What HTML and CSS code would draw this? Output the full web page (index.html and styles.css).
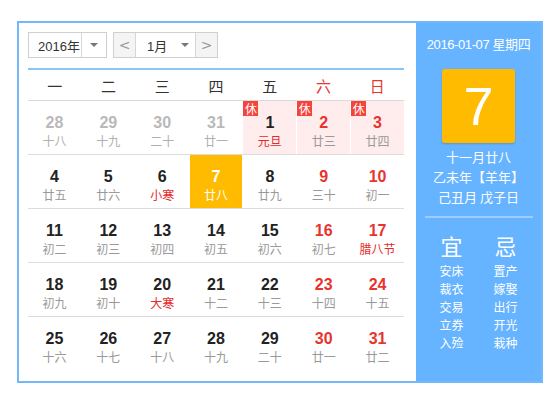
FILE: index.html
```html
<!DOCTYPE html>
<html lang="zh-CN">
<head>
<meta charset="utf-8">
<title>万年历</title>
<link rel="stylesheet" href="styles.css">
</head>
<body>
<div class="cal">
  <div class="main">
    <div class="toolbar">
      <div class="sel year"><span class="val">2016年</span><span class="drop"><i class="caret"></i></span></div>
      <div class="month-group">
        <span class="nav">&lt;</span>
        <div class="sel month"><span class="val">1月</span><span class="drop"><i class="caret"></i></span></div>
        <span class="nav">&gt;</span>
      </div>
    </div>
    <div class="week">
      <span>一</span><span>二</span><span>三</span><span>四</span><span>五</span><span class="red">六</span><span class="red">日</span>
    </div>
    <div class="row">
      <div class="cell other"><b>28</b><em>十八</em></div>
      <div class="cell other"><b>29</b><em>十九</em></div>
      <div class="cell other"><b>30</b><em>二十</em></div>
      <div class="cell other"><b>31</b><em>廿一</em></div>
      <div class="cell hol"><span class="badge">休</span><b>1</b><em class="fest">元旦</em></div>
      <div class="cell hol wk"><span class="badge">休</span><b>2</b><em>廿三</em></div>
      <div class="cell hol wk"><span class="badge">休</span><b>3</b><em>廿四</em></div>
    </div>
    <div class="row">
      <div class="cell"><b>4</b><em>廿五</em></div>
      <div class="cell"><b>5</b><em>廿六</em></div>
      <div class="cell"><b>6</b><em class="fest">小寒</em></div>
      <div class="cell today"><b>7</b><em>廿八</em></div>
      <div class="cell"><b>8</b><em>廿九</em></div>
      <div class="cell wk"><b>9</b><em>三十</em></div>
      <div class="cell wk"><b>10</b><em>初一</em></div>
    </div>
    <div class="row">
      <div class="cell"><b>11</b><em>初二</em></div>
      <div class="cell"><b>12</b><em>初三</em></div>
      <div class="cell"><b>13</b><em>初四</em></div>
      <div class="cell"><b>14</b><em>初五</em></div>
      <div class="cell"><b>15</b><em>初六</em></div>
      <div class="cell wk"><b>16</b><em>初七</em></div>
      <div class="cell wk"><b>17</b><em class="fest">腊八节</em></div>
    </div>
    <div class="row">
      <div class="cell"><b>18</b><em>初九</em></div>
      <div class="cell"><b>19</b><em>初十</em></div>
      <div class="cell"><b>20</b><em class="fest">大寒</em></div>
      <div class="cell"><b>21</b><em>十二</em></div>
      <div class="cell"><b>22</b><em>十三</em></div>
      <div class="cell wk"><b>23</b><em>十四</em></div>
      <div class="cell wk"><b>24</b><em>十五</em></div>
    </div>
    <div class="row last">
      <div class="cell"><b>25</b><em>十六</em></div>
      <div class="cell"><b>26</b><em>十七</em></div>
      <div class="cell"><b>27</b><em>十八</em></div>
      <div class="cell"><b>28</b><em>十九</em></div>
      <div class="cell"><b>29</b><em>二十</em></div>
      <div class="cell wk"><b>30</b><em>廿一</em></div>
      <div class="cell wk"><b>31</b><em>廿二</em></div>
    </div>
  </div>
  <div class="side">
    <div class="date">2016-01-07 星期四</div>
    <div class="big">7</div>
    <div class="lunar">
      <p>十一月廿八</p>
      <p>乙未年【羊年】</p>
      <p>己丑月 戊子日</p>
    </div>
    <div class="sep"></div>
    <div class="yiji">
      <div class="col">
        <div class="head">宜</div>
        <p>安床</p><p>裁衣</p><p>交易</p><p>立券</p><p>入殓</p>
      </div>
      <div class="col">
        <div class="head">忌</div>
        <p>置产</p><p>嫁娶</p><p>出行</p><p>开光</p><p>栽种</p>
      </div>
    </div>
  </div>
</div>
</body>
</html>
```
FILE: styles.css
```css
* { box-sizing: border-box; }
body {
  margin: 0;
  background: #fff;
  font-family: "Liberation Sans", "Noto Sans CJK SC", sans-serif;
  color: #222;
}
p { margin: 0; }

.cal {
  margin: 21px 0 0 17px;
  width: 526px;
  height: 362px;
  border: 2px solid #72b8fb;
  display: flex;
}

.main {
  width: 397px;
  padding: 9px 12px 0 9px;
}

.toolbar {
  display: flex;
  height: 26px;
  gap: 6px;
  margin-bottom: 10px;
}
.sel {
  display: flex;
  border: 1px solid #cfcfcf;
  background: #fff;
  height: 26px;
  font-size: 13px;
  color: #333;
}
.sel .val {
  display: flex;
  align-items: center;
}
.sel .drop {
  display: flex;
  align-items: center;
  justify-content: center;
}
.caret {
  width: 0;
  height: 0;
  border-left: 4px solid transparent;
  border-right: 4px solid transparent;
  border-top: 4px solid #777;
}
.year { width: 79px; }
.year .val { width: 53px; padding-left: 9px; border-right: 1px solid #d8d8d8; }
.year .drop { flex: 1; }

.month-group {
  display: flex;
  border: 1px solid #cfcfcf;
  height: 26px;
}
.month-group .sel { border: none; height: 24px; width: 59px; }
.month .val { width: 38px; padding-left: 11px; }
.month .drop { flex: 1; }
.nav {
  width: 22px;
  display: flex;
  align-items: center;
  justify-content: center;
  background: #f4f4f4;
  color: #999;
  font-size: 14px;
  font-family: "DejaVu Sans", sans-serif;
}
.month-group .nav:first-child { border-right: 1px solid #d6d6d6; }
.month-group .nav:last-child { border-left: 1px solid #d6d6d6; }

.week {
  display: grid;
  grid-template-columns: repeat(7, 1fr);
  border-top: 2px solid #8cc6f8;
  border-bottom: 1px solid #d9d9d9;
  height: 33px;
  align-items: center;
  text-align: center;
  font-family: "Noto Sans CJK SC", sans-serif;
  font-size: 15px;
  color: #333;
}
.week .red { color: #e8342f; }

.row {
  display: grid;
  grid-template-columns: repeat(7, 1fr);
  column-gap: 1px;
  height: 54px;
  border-bottom: 1px solid #dcdcdc;
}
.row.last { border-bottom: none; }

.cell {
  position: relative;
  display: flex;
  flex-direction: column;
  align-items: center;
  padding-top: 12px;
}
.cell b {
  font-size: 16px;
  line-height: 19px;
  font-weight: bold;
  color: #222;
}
.cell em {
  font-style: normal;
  font-family: "Noto Sans CJK SC", sans-serif;
  font-size: 12px;
  line-height: 16px;
  margin-top: 1px;
  color: #999;
}
.cell.wk b { color: #e8342f; }
.cell em.fest { color: #e42a2a; }
.cell.other b { color: #b9b9b9; }
.cell.other em { color: #b0b0b0; }
.cell.hol { background: #ffecec; }
.cell.today { background: #ffbb00; }
.cell.today b, .cell.today em { color: #fff; }

.badge {
  position: absolute;
  left: 0;
  top: 0;
  width: 15px;
  height: 15px;
  background: #f5443c;
  color: #fff;
  font-family: "Noto Sans CJK SC", sans-serif;
  font-size: 12px;
  line-height: 15px;
  text-align: center;
}

.side {
  width: 125px;
  background: #66b3ff;
  color: #fff;
  display: flex;
  flex-direction: column;
  align-items: center;
  padding-top: 14px;
}
.date {
  font-size: 13px;
  line-height: 16px;
  letter-spacing: -0.4px;
}
.big {
  margin-top: 16px;
  width: 73px;
  height: 74px;
  background: #ffbb00;
  border-radius: 3px;
  box-shadow: 0 1px 2px rgba(0, 0, 0, 0.18);
  font-size: 54px;
  line-height: 74px;
  text-align: center;
}
.lunar {
  margin-top: 4px;
  text-align: center;
  font-family: "Noto Sans CJK SC", sans-serif;
  font-size: 13px;
  line-height: 20px;
}
.sep {
  margin-top: 9px;
  width: 108px;
  height: 2px;
  background: #9bcdff;
}
.yiji {
  display: flex;
  margin-top: 13px;
}
.col {
  width: 54px;
  display: flex;
  flex-direction: column;
  align-items: center;
  font-family: "Noto Sans CJK SC", sans-serif;
}
.col .head {
  font-size: 22px;
  line-height: 28px;
  margin-bottom: 3px;
}
.col p {
  font-size: 12px;
  line-height: 18px;
}
```
